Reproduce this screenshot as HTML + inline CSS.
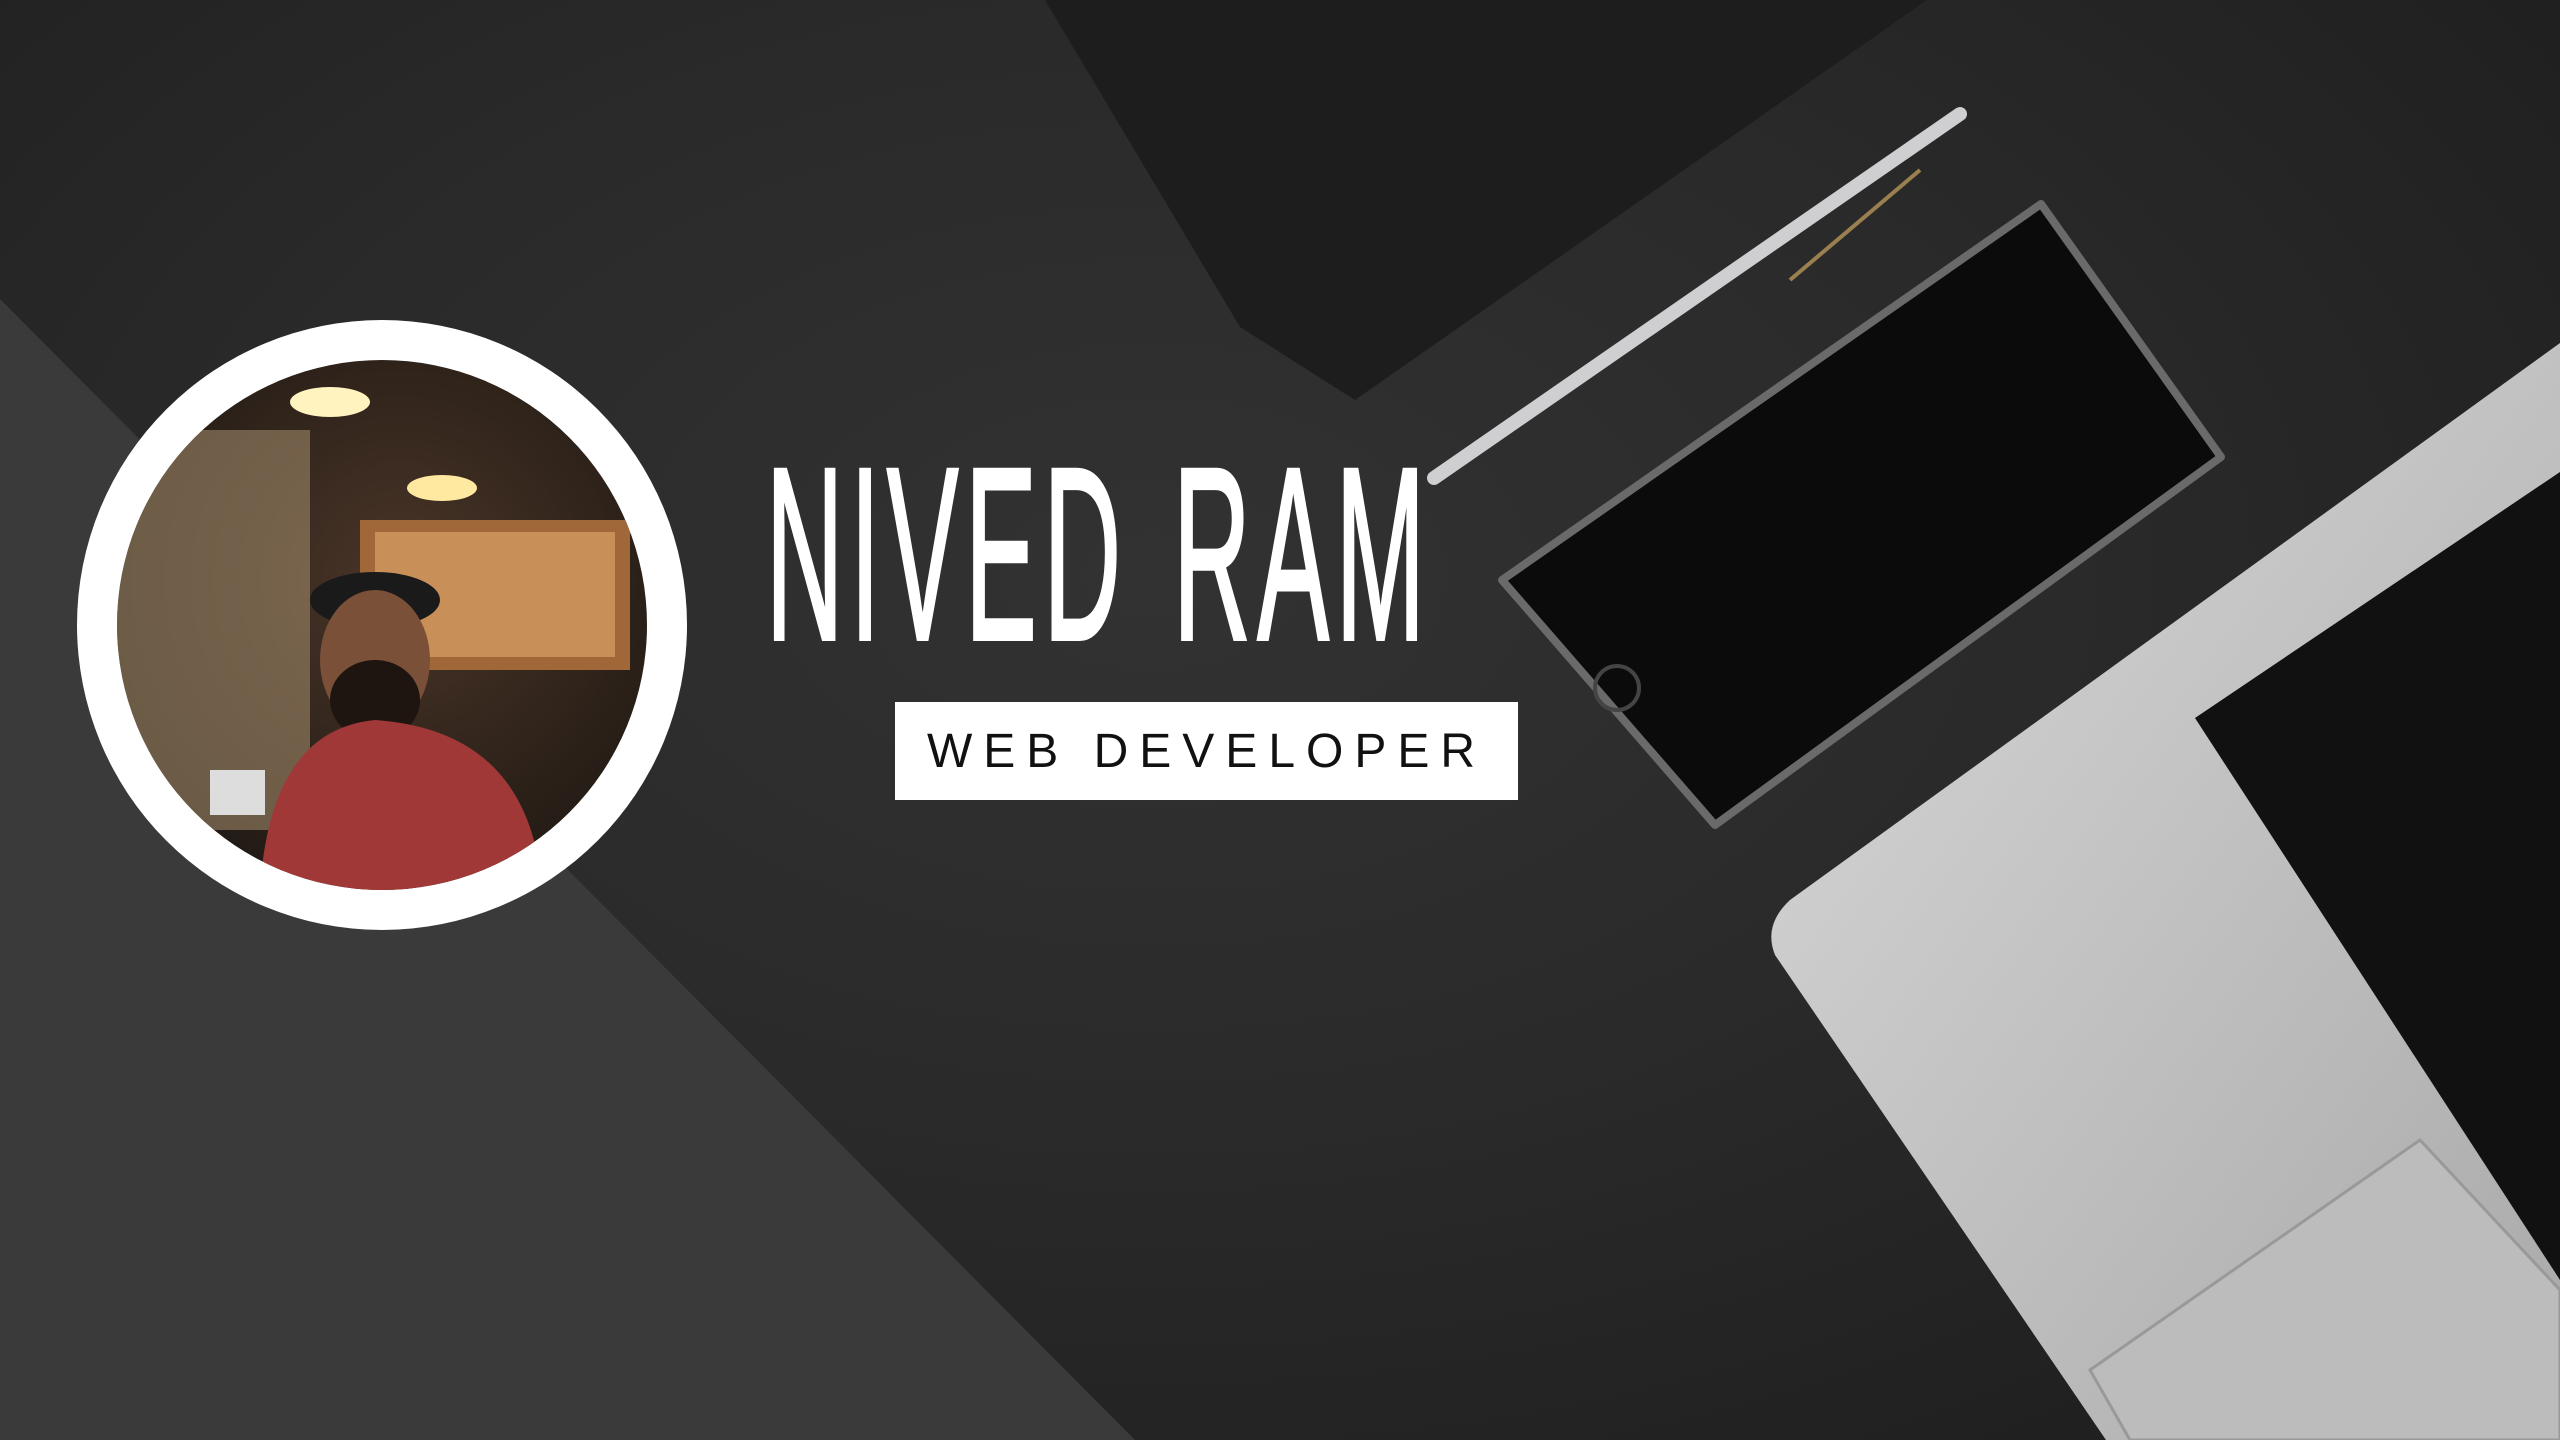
<!DOCTYPE html>
<html><head><meta charset="utf-8"><style>
html,body{margin:0;padding:0}
body{width:2560px;height:1440px;overflow:hidden;position:relative;background:radial-gradient(ellipse at 45% 40%,#323232 0%,#2a2a2a 45%,#1c1c1c 100%);font-family:"Liberation Sans",sans-serif}
svg{position:absolute;left:0;top:0}
.title{position:absolute;left:766px;top:432px;font-size:246px;color:#fff;-webkit-text-stroke:4px #fff;white-space:nowrap;transform:scaleX(0.435);transform-origin:left top;line-height:1;letter-spacing:16px;word-spacing:20px}
.box{position:absolute;left:895px;top:702px;width:623px;height:98px;background:#fff;color:#111;font-size:48px;letter-spacing:11px;text-align:center;line-height:100px}
</style></head><body>
<svg width="2560" height="1440" viewBox="0 0 2560 1440">
<defs>
<linearGradient id="lap" x1="0" y1="0" x2="1" y2="1"><stop offset="0" stop-color="#dadada"/><stop offset="1" stop-color="#a9a9a9"/></linearGradient>
<radialGradient id="ph" cx="0.5" cy="0.4" r="0.7"><stop offset="0" stop-color="#4a3528"/><stop offset="0.6" stop-color="#2a2018"/><stop offset="1" stop-color="#151210"/></radialGradient>
<clipPath id="c"><circle cx="382" cy="625" r="265"/></clipPath>
</defs>
<polygon points="1045,0 1927,0 1355,400 1240,327" fill="#1d1d1d"/>
<line x1="1434" y1="478" x2="1960" y2="114" stroke="#cfcfd2" stroke-width="14" stroke-linecap="round"/>
<line x1="1790" y1="280" x2="1920" y2="170" stroke="#9a8050" stroke-width="4"/>
<polygon points="2041,204 2221,457 1715,825 1502,580" fill="#0b0b0b" stroke="#6a6a6a" stroke-width="8" stroke-linejoin="round"/>
<circle cx="1617" cy="688" r="22" fill="none" stroke="#444" stroke-width="4"/>
<path d="M1790,900 Q1763,925 1775,955 L2106,1440 L2560,1440 L2560,343 Z" fill="url(#lap)"/>
<polygon points="2195,718 2560,472 2560,1280" fill="#111"/>
<polygon points="2090,1370 2420,1140 2560,1290 2560,1440 2130,1440" fill="#bcbcbc" stroke="#999" stroke-width="3"/>
<polygon points="0,299 1135,1440 0,1440" fill="#3a3a3a"/>
<circle cx="382" cy="625" r="305" fill="#fff"/>
<g clip-path="url(#c)">
<rect x="100" y="340" width="600" height="600" fill="url(#ph)"/>
<rect x="110" y="430" width="200" height="400" fill="#a89070" opacity="0.55"/>
<rect x="360" y="520" width="270" height="150" fill="#a06838"/>
<rect x="375" y="532" width="240" height="125" fill="#c89058"/>
<ellipse cx="330" cy="402" rx="40" ry="15" fill="#fff3c0"/>
<ellipse cx="442" cy="488" rx="35" ry="13" fill="#ffe8a0"/>
<ellipse cx="375" cy="600" rx="65" ry="28" fill="#1a1a1a"/>
<ellipse cx="375" cy="660" rx="55" ry="70" fill="#7a5038"/>
<ellipse cx="375" cy="700" rx="45" ry="40" fill="#1e1410"/>
<path d="M260,890 Q270,730 375,720 Q520,730 540,870 L540,940 L260,940 Z" fill="#a03838"/>
<rect x="210" y="770" width="55" height="45" fill="#ddd"/>
</g>
</svg>
<div class="title">NIVED RAM</div>
<div class="box">WEB DEVELOPER</div>
</body></html>
